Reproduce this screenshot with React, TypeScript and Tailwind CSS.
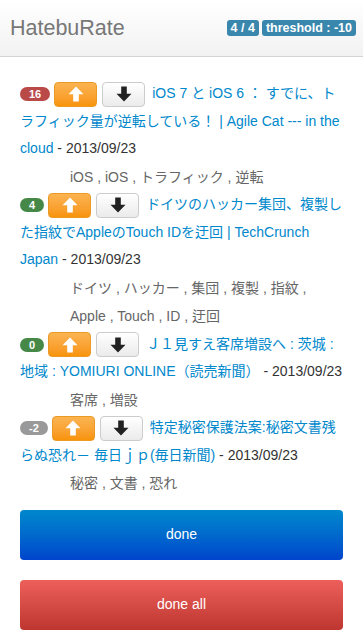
import type { ReactNode } from "react";

const items = [
  {
    score: "16",
    badge: "bg-[#b94a48]",
    title: "iOS 7 と iOS 6 ： すでに、トラフィック量が逆転している！ | Agile Cat --- in the cloud",
    date: "2013/09/23",
    tags: "iOS , iOS , トラフィック , 逆転",
  },
  {
    score: "4",
    badge: "bg-[#468847]",
    title: "ドイツのハッカー集団、複製した指紋でAppleのTouch IDを迂回 | TechCrunch Japan",
    date: "2013/09/23",
    tags: "ドイツ , ハッカー , 集団 , 複製 , 指紋 , Apple , Touch , ID , 迂回",
  },
  {
    score: "0",
    badge: "bg-[#468847]",
    title: "Ｊ１見すえ客席増設へ : 茨城 : 地域 : YOMIURI ONLINE（読売新聞）",
    date: "2013/09/23",
    tags: "客席 , 増設",
  },
  {
    score: "-2",
    badge: "bg-[#999999]",
    title: "特定秘密保護法案:秘密文書残らぬ恐れ－ 毎日ｊｐ(毎日新聞)",
    date: "2013/09/23",
    tags: "秘密 , 文書 , 恐れ",
  },
];

const ArrowUp = ({ className }: { className?: string }) => (
  <svg viewBox="0 0 16 16" className={className} fill="currentColor">
    <path d="M8 0.5 L15.5 8.2 L10.8 8.2 L10.8 15.5 L5.2 15.5 L5.2 8.2 L0.5 8.2 Z" />
  </svg>
);

const ArrowDown = ({ className }: { className?: string }) => (
  <svg viewBox="0 0 16 16" className={className} fill="currentColor">
    <path d="M8 15.5 L15.5 7.8 L10.8 7.8 L10.8 0.5 L5.2 0.5 L5.2 7.8 L0.5 7.8 Z" />
  </svg>
);

const Label = ({ children }: { children: ReactNode }) => (
  <span className="rounded-[3px] bg-[#3a87ad] px-[4px] text-[12.5px] font-bold leading-[16px] text-white">
    {children}
  </span>
);

export default function App() {
  return (
    <div
      className="min-h-[642px] bg-white text-[14px] text-[#333]"
      style={{ fontFamily: '"Liberation Sans", "Noto Sans CJK JP", sans-serif' }}
    >
      {/* navbar */}
      <div className="flex h-[57px] items-center justify-between border-b border-[#d4d4d4] bg-gradient-to-b from-white to-[#f2f2f2] pl-[10px] pr-[7px]">
        <span className="text-[21.5px] text-[#777]">HatebuRate</span>
        <div className="flex gap-[3px]">
          <Label>4 / 4</Label>
          <Label>threshold : -10</Label>
        </div>
      </div>

      <div className="px-5 pt-[23px]">
        {items.map((it) => (
          <div key={it.title}>
            <div className="leading-[27.5px]">
              <span
                className={`${it.badge} mr-[4px] inline-block rounded-[9px] px-[9px] align-middle text-[11px] font-bold leading-[14px] text-white`}
              >
                {it.score}
              </span>
              <span className="mr-[5px] inline-flex h-[25px] w-[43px] items-center justify-center rounded-[4px] border border-[#eb9a25] bg-gradient-to-b from-[#fbb450] to-[#f89406] align-middle text-white">
                <ArrowUp className="h-[16px] w-[16px]" />
              </span>
              <span className="mr-[7px] inline-flex h-[25px] w-[43px] items-center justify-center rounded-[4px] border border-[#cccccc] bg-gradient-to-b from-white to-[#ebebeb] align-middle text-[#222]">
                <ArrowDown className="h-[16px] w-[16px]" />
              </span>
              <a className="text-[#0088cc]">{it.title}</a>
              <span> - {it.date}</span>
            </div>
            <div className="ml-[50px] leading-[28.5px] text-[#666]">{it.tags}</div>
          </div>
        ))}

        <div className="mt-[12px] flex flex-col gap-5">
          <button className="h-[50px] w-full rounded-[4px] bg-gradient-to-b from-[#0088cc] to-[#0044cc] text-[14px] text-white">
            done
          </button>
          <button className="h-[50px] w-full rounded-[4px] bg-gradient-to-b from-[#ee5f5b] to-[#bd362f] text-[14px] text-white">
            done all
          </button>
        </div>
      </div>
    </div>
  );
}
